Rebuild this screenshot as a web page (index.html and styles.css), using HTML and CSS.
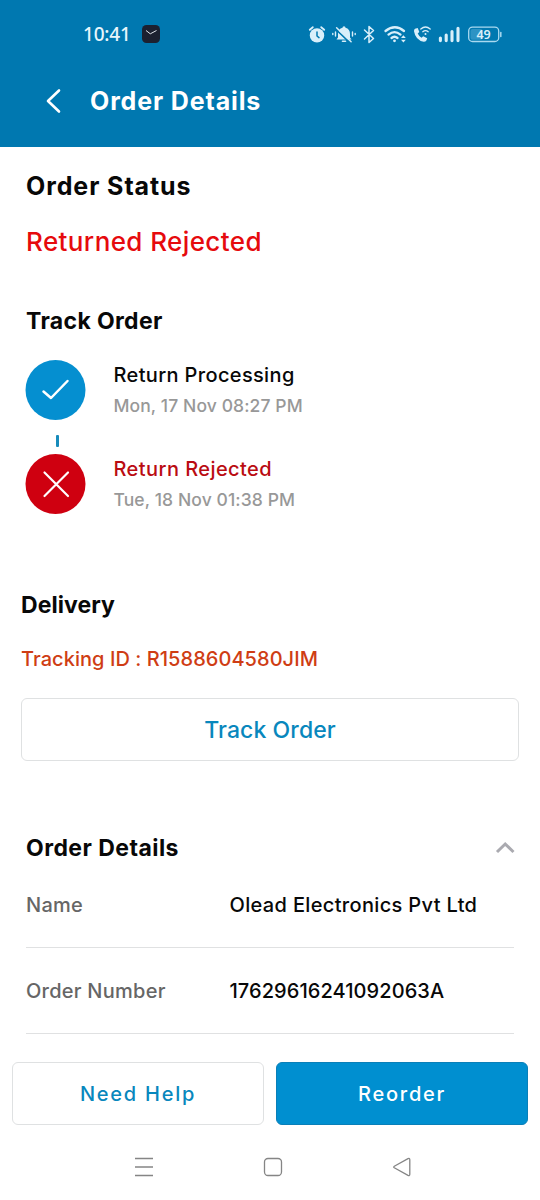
FILE: index.html
```html
<!DOCTYPE html>
<html lang="en">
<head>
<meta charset="utf-8">
<title>Order Details</title>
<link rel="stylesheet" href="styles.css">
</head>
<body>
<header class="top">
  <div class="statusbar">
    <span class="time">10:41</span>
    <svg class="clockapp" width="18" height="18" viewBox="0 0 18 18"><rect width="18" height="18" rx="4.5" fill="#1c2030"/><path d="M4 5.500 8.300 8.800 14.500 5.500" fill="none" stroke="#dfe3ea" stroke-width="1"/></svg>
    <svg class="sysicons" width="200" height="24" viewBox="306 22 200 24" fill="none" stroke="#d9effa" stroke-linecap="round">
      <circle cx="317" cy="35.4" r="7.2" fill="#d9effa" stroke="none"/>
      <path d="M309.8 29.8l3-2.6M324.2 29.8l-3-2.6" stroke-width="1.8"/>
      <path d="M317 32v4l2 1.6" stroke="#0078b0" stroke-width="1.5"/>
      <path d="M336.500 39.500l1.500-2v-3.500q0-5 4.500-6.200a1.500 1.500 0 0 1 3 0q4.500 1.200 4.500 6.200v3.500l1.500 2z" fill="#d9effa" stroke="none"/>
      <path d="M342.500 41.300h3" stroke-width="1.600"/>
      <path d="M336 29.300l14 13.500" stroke="#0078b0" stroke-width="1.600"/>
      <path d="M336.600 27.800l14.500 14" stroke-width="1.500"/>
      <path d="M335.500 32v4M332.800 33.500v1M352.500 32v4M355.200 33.500v1" stroke-width="1.400"/>
      <path d="M364.500 30l9 8.500-4.500 4V26.500l4.500 4-9 8.500" stroke-width="1.500" stroke-linejoin="round"/>
      <path d="M385.500 31q9.500-7.500 18.500 0M388.500 34.600q6-5 12 0M391.500 38q3-2.500 6 0" stroke-width="2.300"/>
      <circle cx="394.500" cy="40.800" r="1.400" fill="#d9effa" stroke="none"/>
      <path d="M401 38l2.400-2.700 2.400 2.700zM401 39.800l2.400 2.700 2.400-2.700z" fill="#d9effa" stroke="none"/>
      <path d="M415 28.800l2.700-.8 1.600 4-1.600 1.500q1.200 2.700 3.800 4.200l1.700-1.500 4 2-.8 2.400q-.8 1.200-2.700 1.200Q415.500 40 414 31.200q-.1-1.600 1-2.400z" fill="#d9effa" stroke="none"/>
      <path d="M420.800 29q4.700-4 9.400 0M422.800 31.700q2.700-2.300 5.400 0" stroke-width="1.300"/>
      <circle cx="425.500" cy="34" r="1" fill="#d9effa" stroke="none"/>
      <path d="M440.400 38v2.600M446.200 35v5.600M452 31.500v9.100M458 28.300v12.300" stroke-width="3.100"/>
      <rect x="468.700" y="27.200" width="30" height="14.300" rx="3.800" stroke="#a9d9f0" stroke-width="1.300"/>
      <rect x="470.500" y="29" width="12" height="10.700" rx="2" fill="#2d93c4" stroke="none"/>
      <path d="M500.800 32.500v4" stroke="#a9d9f0" stroke-width="1.500"/>
      <text class="battery" x="483.600" y="38.800" text-anchor="middle">49</text>
    </svg>
  </div>
  <div class="titlebar">
    <svg width="18" height="26" viewBox="0 0 18 26"><path d="M16 2.500 5 13 16 23.500" fill="none" stroke="#fff" stroke-width="2.600" stroke-linecap="round" stroke-linejoin="round"/></svg>
    <h1>Order Details</h1>
  </div>
</header>
<main>
  <section class="status">
    <h2 class="order-status">Order Status</h2>
    <p class="state">Returned Rejected</p>
    <h2 class="track-title">Track Order</h2>
    <div class="step">
      <svg width="60" height="60" viewBox="0 0 60 60"><circle cx="29.500" cy="30" r="30" fill="#058fd0"/><path d="M17.500 31.500 25 38 41.500 21" fill="none" stroke="#fff" stroke-width="2.500" stroke-linecap="round" stroke-linejoin="round"/></svg>
      <div><p class="step-name">Return Processing</p><p class="step-date">Mon, 17 Nov 08:27 PM</p></div>
    </div>
    <div class="connector"><i></i></div>
    <div class="step">
      <svg width="60" height="60" viewBox="0 0 60 60"><circle cx="29.500" cy="30" r="30" fill="#cf0010"/><path d="M18.500 18.500 42 42M42 18.500 18.500 42" fill="none" stroke="#fff" stroke-width="2.200" stroke-linecap="round"/></svg>
      <div><p class="step-name rejected">Return Rejected</p><p class="step-date">Tue, 18 Nov 01:38 PM</p></div>
    </div>
  </section>
  <section class="delivery">
    <h2>Delivery</h2>
    <p class="tracking">Tracking ID : R1588604580JIM</p>
    <button class="btn track-btn">Track Order</button>
  </section>
  <section class="details">
    <div class="details-head"><h2>Order Details</h2>
      <svg width="20" height="14" viewBox="0 0 20 14"><path d="M3 11 11.200 3 19.500 11" fill="none" stroke="#aaaab0" stroke-width="3"/></svg>
    </div>
    <div class="row name-row"><span class="label">Name</span><span class="value v-name">Olead Electronics Pvt Ltd</span></div>
    <div class="row"><span class="label">Order Number</span><span class="value v-num">17629616241092063A</span></div>
  </section>
</main>
<footer>
  <div class="actions">
    <button class="btn help">Need Help</button>
    <button class="btn reorder">Reorder</button>
  </div>
  <nav>
    <svg width="20" height="20" viewBox="0 0 20 20"><path d="M1 1.500h18M1 10h18M1 18.500h18" stroke="#858585" stroke-width="1.400"/></svg>
    <svg width="20" height="20" viewBox="0 0 20 20"><rect x="1.500" y="1.500" width="17" height="17" rx="3.500" fill="none" stroke="#858585" stroke-width="1.300"/></svg>
    <svg width="20" height="20" viewBox="0 0 20 20"><path d="M2.300 9.200 16 1.700q1.800-.8 1.800 1v14.600q0 1.800-1.800 1L2.300 10.800q-1.200-.8 0-1.600z" fill="none" stroke="#858585" stroke-width="1.300"/></svg>
  </nav>
</footer>
</body>
</html>
```
FILE: styles.css
```css
* { box-sizing: border-box; margin: 0; padding: 0; }
body { width: 540px; height: 1200px; display: flex; flex-direction: column; overflow: hidden; background: #fff; color: #080808; font-family: Inter, "Liberation Sans", sans-serif; font-weight: 500; white-space: nowrap; }
svg { display: block; flex: none; overflow: visible; }
.top { height: 147px; background: #0078b0; color: #fff; }
.statusbar { height: 68px; padding-left: 83px; display: flex; align-items: center; }
.time { width: 59px; font: 500 19px/26px "Noto Sans", sans-serif; letter-spacing: -.2px; color: #e8f6fc; }
.sysicons { margin-left: 146px; }
.battery { font: 600 12.5px "Noto Sans", sans-serif; fill: #d9effa; stroke: none; }
.titlebar { height: 66px; padding-left: 43px; display: flex; align-items: center; gap: 29px; }
h1 { font-size: 25px; font-weight: 700; letter-spacing: .87px; }
h2 { font-size: 23px; line-height: 30px; font-weight: 700; letter-spacing: .05px; }
.status { height: 443px; padding: 24px 26px 0; }
.order-status { font-size: 25px; letter-spacing: .92px; }
.state { margin-top: 25px; font-size: 26px; line-height: 32px; letter-spacing: .4px; color: #e60a0d; }
.track-title { margin-top: 48px; margin-bottom: 24px; letter-spacing: .35px; }
.step { height: 60px; display: flex; gap: 27.500px; }
.step-name { font-size: 20px; line-height: 30px; letter-spacing: .35px; }
.step-date { font-size: 17.5px; line-height: 31px; letter-spacing: .1px; color: #989898; }
.rejected { letter-spacing: .43px; color: #ba0c12; }
.connector { height: 34px; padding: 15px 0 0 29.500px; }
.connector i { display: block; width: 3px; height: 12px; border-radius: 1px; background: #178bbb; }
.delivery { height: 243px; padding: 0 21px; }
.tracking { margin-top: 24px; font-size: 20px; line-height: 30px; letter-spacing: .05px; color: #cf3d14; }
.btn { height: 63px; border: 1.5px solid #dfe1e2; border-radius: 6px; background: #fff; color: #0887bd; font: 500 23px/30px Inter, sans-serif; letter-spacing: .1px; }
.track-btn { width: 498px; margin-top: 24px; }
.details { padding: 0 26px; }
.details-head { display: flex; justify-content: space-between; align-items: center; }
.details-head h2 { letter-spacing: .45px; }
.row { height: 86px; display: flex; align-items: center; border-bottom: 1.500px solid #e0e1e2; font-size: 20px; }
.name-row { height: 85px; }
.label { width: 203.500px; letter-spacing: .25px; color: #666; }
.v-name { letter-spacing: .34px; }
.v-num { letter-spacing: .07px; }
footer { margin-top: auto; height: 150px; padding: 12px 12px 0; background: #fff; }
.actions { display: flex; gap: 12px; }
.actions .btn { flex: 1; font-size: 20px; letter-spacing: 1.750px; }
.actions .reorder { background: #008fd0; color: #fff; border-color: #0a7fb8; }
nav { display: flex; justify-content: space-between; padding: 32px 116px 0 122px; }
```
